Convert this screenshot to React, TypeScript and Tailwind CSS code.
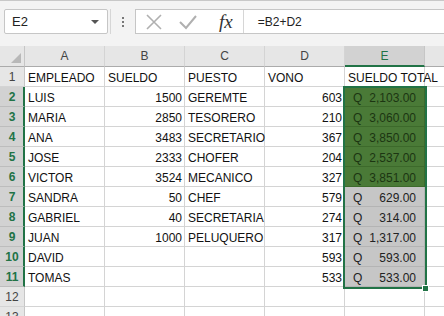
import React from "react";

const font = { fontFamily: '"Liberation Sans", Arial, sans-serif' };

type Row = [string, string, string, string, string];

const rows: Row[] = [
  ["EMPLEADO", "SUELDO", "PUESTO", "VONO", "SUELDO TOTAL"],
  ["LUIS", "1500", "GEREMTE", "603", "2,103.00"],
  ["MARIA", "2850", "TESORERO", "210", "3,060.00"],
  ["ANA", "3483", "SECRETARIO", "367", "3,850.00"],
  ["JOSE", "2333", "CHOFER", "204", "2,537.00"],
  ["VICTOR", "3524", "MECANICO", "327", "3,851.00"],
  ["SANDRA", "50", "CHEF", "579", "629.00"],
  ["GABRIEL", "40", "SECRETARIA", "274", "314.00"],
  ["JUAN", "1000", "PELUQUERO", "317", "1,317.00"],
  ["DAVID", "", "", "593", "593.00"],
  ["TOMAS", "", "", "533", "533.00"],
  ["", "", "", "", ""],
  ["", "", "", "", ""],
];

function FormulaBar() {
  return (
    <div className="flex h-[46px] items-start border-t border-[#c8c8c8] bg-[#f3f3f3] pt-[8px]">
      <div className="ml-[4px] flex h-[25px] w-[104px] items-center justify-between rounded-[2px] border border-[#c6c6c6] bg-white pl-[7px] pr-[8px]">
        <span className="text-[13px] text-[#222]">E2</span>
        <span className="h-0 w-0 border-x-[4px] border-t-[4px] border-x-transparent border-t-[#555]" />
      </div>
      <div className="ml-[2px] h-[25px] w-px bg-[#d6d6d6]" />
      <div className="flex h-[25px] w-[24px] flex-col items-center justify-center gap-[2px]">
        <span className="h-[2px] w-[2px] bg-[#777]" />
        <span className="h-[2px] w-[2px] bg-[#777]" />
        <span className="h-[2px] w-[2px] bg-[#777]" />
      </div>
      <div className="flex h-[25px] flex-1 items-center border-y border-l border-[#c6c6c6] bg-white">
        <svg width="20" height="18" viewBox="0 0 20 18" className="ml-[8px]">
          <path d="M3 2 L17 16 M17 2 L3 16" stroke="#b0b0b0" strokeWidth="1.6" fill="none" />
        </svg>
        <svg width="20" height="18" viewBox="0 0 20 18" className="ml-[14px]">
          <path d="M2 9 L8 15 L18 3" stroke="#b0b0b0" strokeWidth="2" fill="none" />
        </svg>
        <span
          className="ml-[21px] text-[19px] italic leading-none text-[#333]"
          style={{ fontFamily: '"Liberation Serif", serif' }}
        >
          fx
        </span>
        <div className="ml-[10px] h-[23px] w-px bg-[#d6d6d6]" />
        <span className="ml-[14px] text-[12px] text-[#222]">=B2+D2</span>
      </div>
    </div>
  );
}

function ColHeader({ label, active }: { label: string; active?: boolean }) {
  return (
    <div
      className={
        active
          ? "flex h-[21px] w-[80px] shrink-0 items-center justify-center border-b-2 border-r border-b-[#217346] border-r-[#c6c6c6] bg-[#d2d2d2] text-[12px] text-[#217346]"
          : "flex h-[21px] w-[80px] shrink-0 items-center justify-center border-b border-r border-b-[#ababab] border-r-[#d4d4d4] bg-[#e6e6e6] text-[12px] text-[#444]"
      }
    >
      {label}
    </div>
  );
}

export default function App() {
  return (
    <div className="h-[316px] w-[444px] overflow-hidden bg-white" style={font}>
      <FormulaBar />
      <div className="relative">
        <div className="flex">
          <div className="relative h-[21px] w-[25px] shrink-0 border-b border-r border-b-[#ababab] border-r-[#c6c6c6] bg-[#e6e6e6]">
            <svg width="12" height="12" className="absolute bottom-[2px] right-[2px]">
              <path d="M11 1 L11 11 L1 11 Z" fill="#b8b8b8" />
            </svg>
          </div>
          <ColHeader label="A" />
          <ColHeader label="B" />
          <ColHeader label="C" />
          <ColHeader label="D" />
          <ColHeader label="E" active />
          <div className="h-[21px] flex-1 border-b border-b-[#ababab] bg-[#e6e6e6]" />
        </div>

        {rows.map((r, i) => {
          const n = i + 1;
          const sel = n >= 2 && n <= 11;
          const green = n >= 2 && n <= 6;
          const isHeader = n === 1;
          return (
            <div key={n} className="flex h-[20px] text-[12px] text-[#111]">
              <div
                className={
                  sel
                    ? "flex w-[25px] shrink-0 items-center justify-center border-b border-r-2 border-b-[#bdbdbd] border-r-[#217346] bg-[#d2d2d2] pl-[1px] font-bold text-[#217346]"
                    : "flex w-[25px] shrink-0 items-center justify-center border-b border-r border-b-[#d4d4d4] border-r-[#c6c6c6] bg-[#e6e6e6] text-[#444]"
                }
              >
                {n}
              </div>
              <div className="flex w-[80px] shrink-0 items-center border-b border-r border-[#d4d4d4] pl-[3px] pt-[2px]">{r[0]}</div>
              <div
                className={
                  "flex w-[80px] shrink-0 items-center border-b border-r border-[#d4d4d4] pt-[2px] " +
                  (isHeader ? "pl-[3px]" : "justify-end pr-[2px]")
                }
              >
                {r[1]}
              </div>
              <div className="flex w-[80px] shrink-0 items-center whitespace-nowrap border-b border-r border-[#d4d4d4] pl-[3px] pt-[2px]">{r[2]}</div>
              <div
                className={
                  "flex w-[80px] shrink-0 items-center border-b border-r border-[#d4d4d4] pt-[2px] " +
                  (isHeader ? "pl-[3px]" : "justify-end pr-[2px]")
                }
              >
                {r[3]}
              </div>
              {isHeader ? (
                <div className="flex w-[80px] shrink-0 items-center whitespace-nowrap border-b border-r border-[#d4d4d4] pl-[3px] pt-[2px]">
                  {r[4]}
                </div>
              ) : (
                <div
                  className={
                    "flex w-[80px] shrink-0 items-center justify-between whitespace-nowrap border-b border-r pl-[8px] pr-[8px] pt-[2px] " +
                    (green
                      ? "border-[#3d6a2b] bg-[#4a7a37] text-[#1c3512]"
                      : sel
                        ? "border-[#b4b4b4] bg-[#c6c6c6] text-[#222]"
                        : "border-[#d4d4d4]")
                  }
                >
                  {r[4] && <span>Q</span>}
                  <span>{r[4]}</span>
                </div>
              )}
              <div className="flex-1 border-b border-[#d4d4d4]" />
            </div>
          );
        })}

        <div className="pointer-events-none absolute left-[343px] top-[40px] h-[203px] w-[84px] border-2 border-[#217346]" />
        <div className="absolute left-[422px] top-[239px] h-[7px] w-[7px] border border-white bg-[#217346]" />
      </div>
    </div>
  );
}
